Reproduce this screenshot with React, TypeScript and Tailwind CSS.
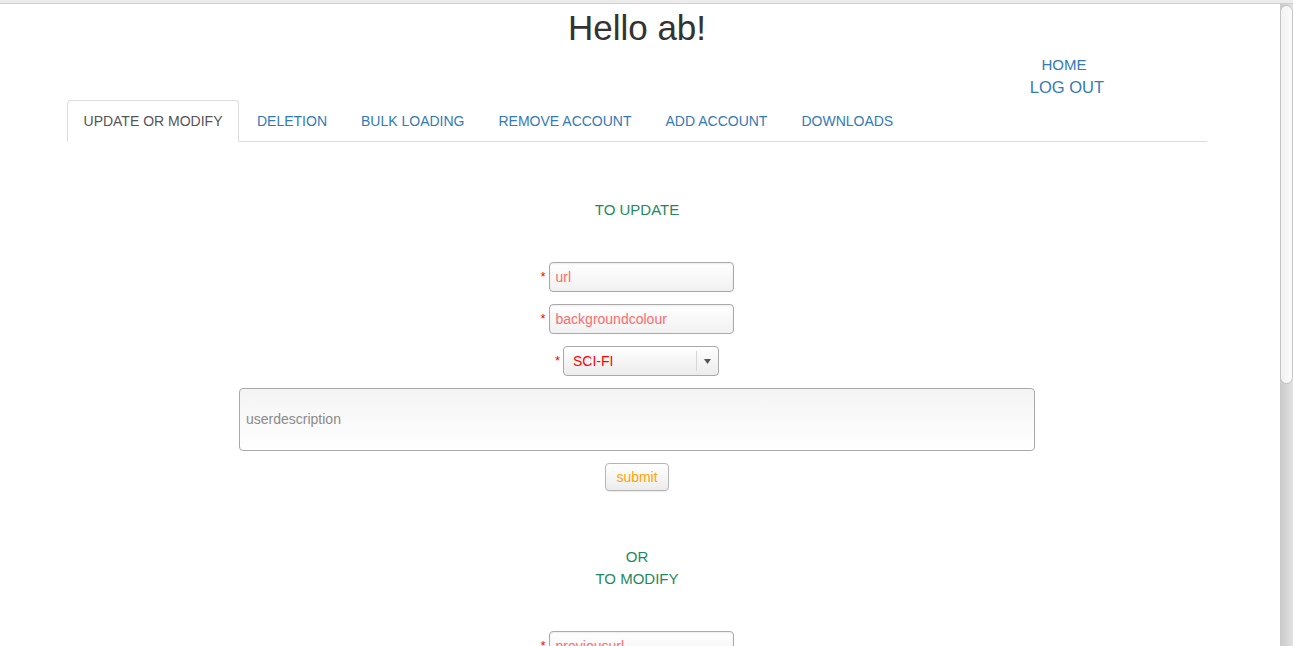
import React from "react";

const font = { fontFamily: '"Liberation Sans", Arial, sans-serif' };

function Field({ placeholder, mt }: { placeholder: string; mt?: string }) {
  return (
    <div className={`flex items-start justify-center ${mt ?? ""}`}>
      <span className="text-[#ff0000] text-[13px] leading-none mt-[8px] mr-[3px]">*</span>
      <div className="w-[185px] h-[30px] rounded-[4px] border border-[#a9a9a9] bg-gradient-to-b from-[#ffffff] to-[#f1f1f1] shadow-[inset_0_1px_2px_rgba(0,0,0,0.08)] flex items-center px-[6px] text-[14px] text-[#ff6b6b]">
        {placeholder}
      </div>
    </div>
  );
}

export default function App() {
  const tabs = ["DELETION", "BULK LOADING", "REMOVE ACCOUNT", "ADD ACCOUNT", "DOWNLOADS"];
  return (
    <div className="h-[646px] w-[1293px] overflow-hidden bg-white flex flex-col" style={font}>
      <div className="h-[4px] bg-[#ececec] border-b border-[#d0d0d0] shrink-0" />
      <div className="flex flex-1 min-h-0">
        <div className="w-[1280px] shrink-0 overflow-hidden">
          <div className="w-[1274px]">
            <h1 className="text-center text-[35px] leading-[40px] text-[#333333] mt-[4px]">Hello ab!</h1>
            <div className="w-[1140px] mx-auto relative">
              <div className="flex flex-col items-center w-[120px] ml-[937px] mt-[7px]">
                <a className="text-[15px] leading-[20px] text-[#337ab7]">HOME</a>
                <a className="text-[16.5px] leading-[24px] text-[#337ab7] ml-[6px]">LOG OUT</a>
              </div>
              <div className="flex border-b border-[#dddddd] mt-[1px]">
                <div className="mb-[-1px] mr-[2px] w-[172px] h-[42px] pt-[1px] flex items-center justify-center border border-[#dddddd] border-b-transparent bg-white rounded-t-[4px] text-[14px] text-[#555555]">
                  UPDATE OR MODIFY
                </div>
                {tabs.map((t) => (
                  <div key={t} className="mr-[2px] px-[16px] h-[41px] pt-[1px] flex items-center text-[14px] text-[#337ab7]">
                    {t}
                  </div>
                ))}
              </div>
            </div>
            <div className="text-center text-[15px] text-[#1e8a5c] mt-[59px] leading-[18px]">TO UPDATE</div>
            <div className="flex flex-col mt-[43px]">
              <Field placeholder="url" />
              <Field placeholder="backgroundcolour" mt="mt-[12px]" />
              <div className="flex items-start justify-center mt-[12px]">
                <span className="text-[#ff0000] text-[13px] leading-none mt-[8px] mr-[3px]">*</span>
                <div className="w-[156px] h-[30px] rounded-[4px] border border-[#a9a9a9] bg-gradient-to-b from-[#ffffff] to-[#ececec] flex items-center text-[14px] text-[#ff0000]">
                  <span className="flex-1 pl-[9px]">SCI-FI</span>
                  <span className="w-px h-[20px] bg-[#d6d6d6]" />
                  <span className="w-[21px] flex justify-center">
                    <svg width="7" height="5" viewBox="0 0 7 5"><path d="M0 0 H7 L3.5 5 Z" fill="#555" /></svg>
                  </span>
                </div>
              </div>
              <div className="flex justify-center mt-[12px]">
                <div className="w-[796px] h-[63px] rounded-[4px] border border-[#a9a9a9] bg-gradient-to-b from-[#f4f4f4] to-[#ffffff] flex items-center px-[6px] text-[14px] text-[#8a8a8a]">
                  userdescription
                </div>
              </div>
              <div className="flex justify-center mt-[12px]">
                <div className="w-[64px] h-[28px] rounded-[4px] border border-[#b5b5b5] bg-gradient-to-b from-[#ffffff] to-[#ececec] flex items-center justify-center text-[14px] text-[#ffa500] shadow-[0_1px_1px_rgba(0,0,0,0.08)]">
                  submit
                </div>
              </div>
            </div>
            <div className="text-center text-[15px] text-[#1e8a5c] mt-[55px] leading-[22px]">
              <div>OR</div>
              <div>TO MODIFY</div>
            </div>
            <div className="mt-[41px]">
              <Field placeholder="previousurl" />
            </div>
          </div>
        </div>
        <div className="w-[13px] flex-1 bg-gradient-to-r from-[#c9c9c9] to-[#e2e2e2] flex flex-col">
          <div className="h-[379px] mt-[1px] rounded-b-[7px] rounded-t-[7px] border border-[#c4c4c4] bg-gradient-to-r from-[#f2f2f2] to-[#fbfbfb]" />
        </div>
      </div>
    </div>
  );
}
